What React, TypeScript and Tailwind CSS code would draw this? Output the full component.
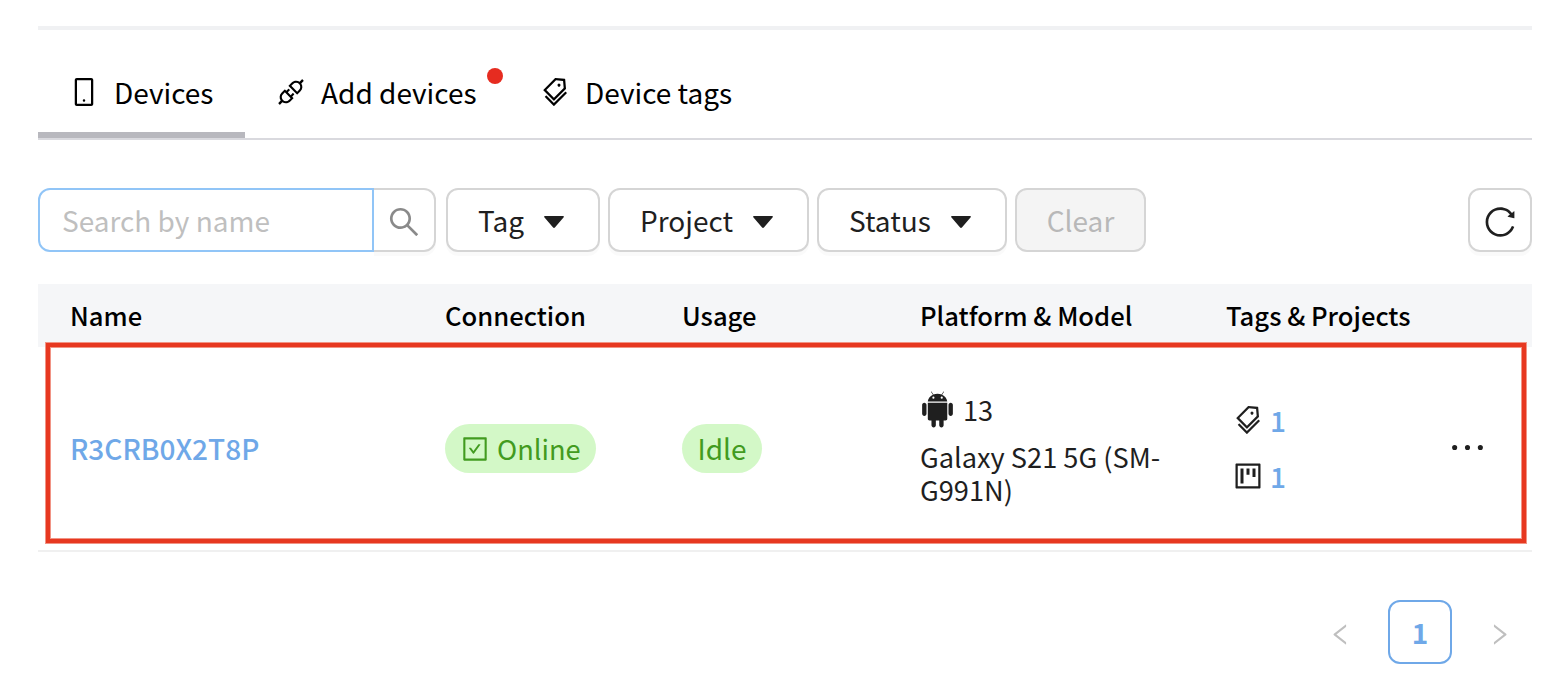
import type { ReactNode } from "react";
import {
  AiFillAndroid,
  AiOutlineApi,
  AiOutlineCheckSquare,
  AiOutlineEllipsis,
  AiOutlineLeft,
  AiOutlineMobile,
  AiOutlineProject,
  AiOutlineReload,
  AiOutlineRight,
  AiOutlineSearch,
  AiOutlineTags,
} from "react-icons/ai";

function FilterButton({ label, className }: { label: string; className: string }) {
  return (
    <button
      className={`flex h-16 items-center rounded-xl border-2 border-[#d5d5d5] bg-white pl-[30px] text-[28px] shadow-[0_4px_0_rgba(0,0,0,0.02)] ${className}`}
    >
      <span>{label}</span>
      <svg className="ml-5 mt-[3px] h-3 w-5" viewBox="0 0 20 12" fill="currentColor">
        <path d="M0.8 0h18.4c.6 0 .9.7.5 1.200L10.900 11.500c-.5.6-1.300.6-1.800 0L.3 1.200C-.1.700.2 0 .8 0z" />
      </svg>
    </button>
  );
}

function Tab({ icon, label, className }: { icon: ReactNode; label: string; className: string }) {
  return (
    <div className={`flex h-full items-center gap-[14px] text-[28px] text-black ${className}`}>
      <span className="text-[32px]">{icon}</span>
      <span>{label}</span>
    </div>
  );
}

const columns = "grid grid-cols-[375px_237px_238px_306px_1fr]";

export default function App() {
  return (
    <main className="h-[692px] w-[1564px] overflow-hidden bg-white pl-[38px] pr-8 pt-[26px] font-['Noto_Sans_CJK_KR','Noto_Sans',sans-serif] text-[#1f1f1f]">
      <div className="h-1 bg-[#f0f1f3]" />

      <nav className="mt-4 flex h-[94px] border-b-2 border-[#d9d9de]">
        <Tab className="w-[207px] border-b-[6px] border-[#b8b8be] pl-[30px] pt-[6px]" icon={<AiOutlineMobile />} label="Devices" />
        <div className="relative">
          <Tab className="w-[264px] pl-[30px]" icon={<AiOutlineApi />} label="Add devices" />
          <span className="absolute left-[242px] top-[22px] size-4 rounded-full bg-[#e62c20]" />
        </div>
        <Tab className="pl-[30px]" icon={<AiOutlineTags />} label="Device tags" />
      </nav>

      <section className="mt-12 flex h-16">
        <div className="flex w-[336px] items-center rounded-l-xl border-2 border-[#91c5f7] pl-[22px] text-[28px] text-[#bfbfbf]">
          Search by name
        </div>
        <button className="mr-[10px] flex w-[62px] items-center justify-center rounded-r-xl border-2 border-l-0 border-[#d5d5d5] pt-[3px] text-[36px] text-[#8a8a8a] shadow-[0_4px_0_rgba(0,0,0,0.02)]">
          <AiOutlineSearch />
        </button>
        <FilterButton label="Tag" className="mr-2 w-[154px]" />
        <FilterButton label="Project" className="mr-2 w-[201px]" />
        <FilterButton label="Status" className="mr-2 w-[190px]" />
        <button className="w-[131px] rounded-xl border-2 border-[#d5d5d5] bg-[#f4f4f4] text-[28px] text-[#b8b8b8]">Clear</button>
        <button className="ml-auto flex w-16 items-center justify-center rounded-xl border-2 border-[#d5d5d5] pt-[3px] text-[36px] shadow-[0_4px_0_rgba(0,0,0,0.02)]">
          <AiOutlineReload />
        </button>
      </section>

      <section className="relative mt-8 h-[268px] border-b-2 border-[#f0f0f0]">
        <div className={`${columns} h-[63px] items-center bg-[#f5f6f8] pl-8 text-[25.6px] font-medium text-black`}>
          <span>Name</span>
          <span>Connection</span>
          <span>Usage</span>
          <span>Platform &amp; Model</span>
          <span>Tags &amp; Projects</span>
        </div>
        <div className={`${columns} h-[203px] items-center pl-8 text-[28px]`}>
          <span className="-mt-[2px] font-medium text-[#6fa8e8]">R3CRB0X2T8P</span>
          <div className="flex">
            <span className="flex h-[49px] w-[151px] items-center gap-[7px] rounded-full bg-[#d3f8c7] pl-[15px] text-[27.2px] text-[#429b20]">
              <AiOutlineCheckSquare className="size-[30px]" />
              <span>Online</span>
            </span>
          </div>
          <div className="flex">
            <span className="flex h-[49px] w-20 items-center justify-center rounded-full bg-[#d3f8c7] pb-[2px] text-[#429b20]">Idle</span>
          </div>
          <div className="-mt-[2px] w-[250px] text-[27.2px] leading-[33px]">
            <div className="mb-[10px] flex h-10 items-center gap-[5px]">
              <AiFillAndroid className="-ml-[3px] size-[41px]" />
              <span>13</span>
            </div>
            <p>Galaxy S21 5G (SM-G991N)</p>
          </div>
          <div className="flex items-center">
            <div className="flex flex-col gap-4 pl-[6px] text-[28px] font-medium leading-10 text-[#6fa8e8]">
              <div className="flex h-10 items-center gap-[6px]">
                <AiOutlineTags className="-mt-px size-8 text-[#1f1f1f]" />
                <span className="-mt-[2px]">1</span>
              </div>
              <div className="flex h-10 items-center gap-[6px]">
                <AiOutlineProject className="-mt-px size-8 text-[#1f1f1f]" />
                <span className="-mt-[2px]">1</span>
              </div>
            </div>
            <AiOutlineEllipsis className="-mt-[3px] ml-[158px] size-[47px]" />
          </div>
        </div>
        <div className="absolute left-2 top-[59px] h-[200px] w-[1480px] border-4 border-[#e73820] shadow-[0_0_0_1px_#f19485,inset_0_0_0_1px_#f19485]" />
      </section>

      <footer className="mt-12 flex h-16 items-center justify-end text-[#bfbfbf]">
        <AiOutlineLeft className="mr-[34px] mt-[5px] size-[27px]" />
        <button className="size-16 rounded-xl border-2 border-[#6fa8e8] text-[28px] font-bold text-[#6fa8e8]">1</button>
        <AiOutlineRight className="ml-[34px] mr-[19px] mt-[5px] size-[27px]" />
      </footer>
    </main>
  );
}
